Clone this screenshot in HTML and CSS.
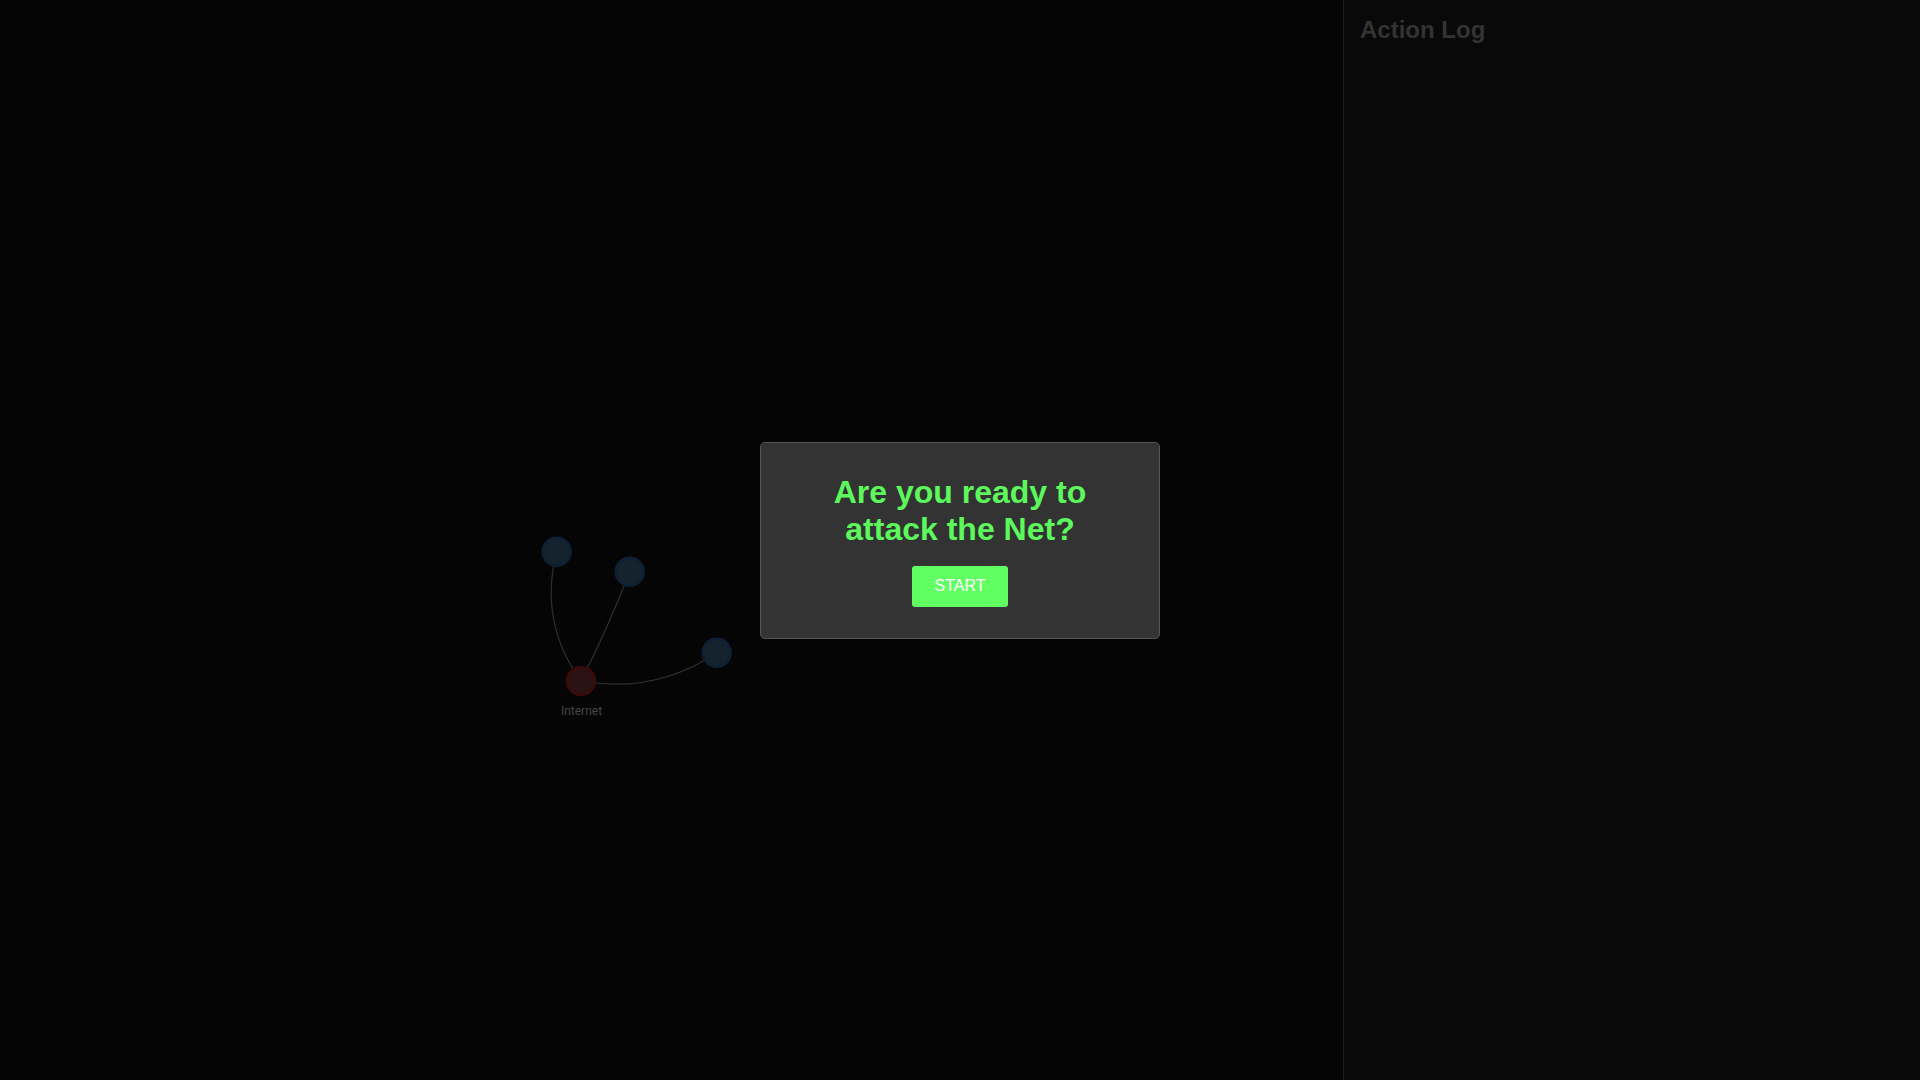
FILE: index.html
```html
<!DOCTYPE html>
<html lang="en">
<head>
<meta charset="utf-8">
<title>Attack the Net</title>
<link rel="stylesheet" href="styles.css">
</head>
<body>
<div class="app">
  <main class="graph-area">
    <svg class="graph" xmlns="http://www.w3.org/2000/svg">
      <g class="links">
        <path class="link" d="M556.7,551.7 Q538.4,622.1 581,681"/>
        <path class="link" d="M629.7,571.7 Q608.1,627.6 581,681"/>
        <path class="link" d="M581,681 Q654.6,694.3 716.7,652.7"/>
      </g>
      <g class="nodes">
        <circle class="node node-host" cx="556.7" cy="551.7" r="14"/>
        <circle class="node node-host" cx="629.7" cy="571.7" r="14"/>
        <circle class="node node-host" cx="716.7" cy="652.7" r="14"/>
        <circle class="node node-internet" cx="581" cy="681" r="14"/>
        <text class="node-label" x="581.5" y="715">Internet</text>
      </g>
    </svg>
  </main>
  <aside class="log">
    <h2 class="log-title">Action Log</h2>
    <div class="log-entries"></div>
  </aside>
</div>
<div class="overlay">
  <div class="modal">
    <h2 class="modal-title">Are you ready to attack the Net?</h2>
    <button class="start-btn" type="button">START</button>
  </div>
</div>
</body>
</html>
```
FILE: styles.css
```css
html, body {
  margin: 0;
  padding: 0;
  height: 100%;
  background: #050505;
  font-family: "Liberation Sans", Arial, sans-serif;
  overflow: hidden;
}

.app {
  display: flex;
  height: 100vh;
}

.graph-area {
  flex: 1;
  min-width: 0;
  background: #050505;
}

.graph {
  display: block;
  width: 100%;
  height: 100%;
}

.link {
  fill: none;
  stroke: #2f2f2f;
  stroke-width: 1.2;
}

.node {
  stroke-width: 2.5;
}

.node-host {
  fill: #14232d;
  stroke: #0d2036;
}

.node-internet {
  fill: #2b1315;
  stroke: #3b0a0b;
}

.node-label {
  font-family: Roboto, "Liberation Sans", sans-serif;
  font-size: 12px;
  fill: #454545;
  text-anchor: middle;
}

.log {
  box-sizing: border-box;
  width: 577px;
  flex: none;
  border-left: 1px solid #1c1c1c;
  background: #090909;
  padding: 16px;
}

.log-title {
  margin: 0;
  font-size: 24px;
  font-weight: bold;
  color: #333333;
  line-height: normal;
}

.overlay {
  position: fixed;
  inset: 0;
  display: flex;
  align-items: center;
  justify-content: center;
}

.modal {
  box-sizing: border-box;
  width: 400px;
  padding: 31px 30px;
  background: #333333;
  border: 1px solid #555555;
  border-radius: 5px;
  text-align: center;
}

.modal-title {
  margin: 0 0 18px;
  font-size: 32px;
  font-weight: bold;
  line-height: normal;
  color: #5cf85c;
}

.start-btn {
  display: block;
  margin: 0 auto;
  padding: 11.5px 23px;
  border: none;
  border-radius: 3px;
  background: #62ff62;
  color: #ffffff;
  font-family: "Liberation Sans", Arial, sans-serif;
  font-size: 16px;
  font-weight: 400;
  line-height: normal;
  cursor: pointer;
}
```
